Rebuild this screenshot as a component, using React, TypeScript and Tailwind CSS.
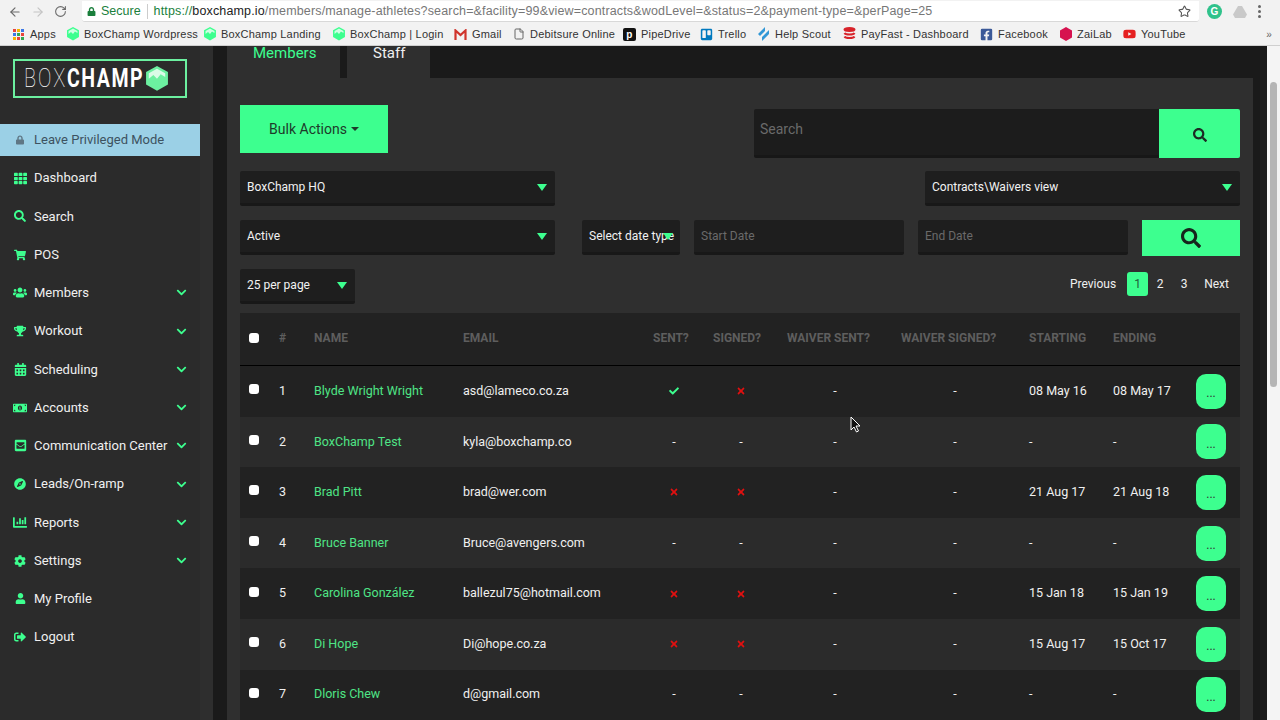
import {
  FaCalendarAlt,
  FaChartBar,
  FaCheck,
  FaChevronDown,
  FaCog,
  FaCompass,
  FaEnvelopeSquare,
  FaFacebookSquare,
  FaLock,
  FaMoneyBillAlt,
  FaSearch,
  FaShoppingCart,
  FaSignOutAlt,
  FaTh,
  FaTimes,
  FaTrello,
  FaTrophy,
  FaUser,
  FaUsers,
  FaYoutube,
} from "react-icons/fa";
import { ArrowLeft, ArrowRight, File, RotateCw, Star } from "lucide-react";
import React from "react";

const navItems = [
  { label: "Dashboard", icon: <FaTh size={13} /> },
  { label: "Search", icon: <FaSearch size={12} /> },
  { label: "POS", icon: <FaShoppingCart size={12} /> },
  { label: "Members", icon: <FaUsers size={15} />, more: true },
  { label: "Workout", icon: <FaTrophy size={12} />, more: true },
  { label: "Scheduling", icon: <FaCalendarAlt size={13} />, more: true },
  { label: "Accounts", icon: <FaMoneyBillAlt size={14} />, more: true },
  { label: "Communication Center", icon: <FaEnvelopeSquare size={13} />, more: true },
  { label: "Leads/On-ramp", icon: <FaCompass size={12} />, more: true },
  { label: "Reports", icon: <FaChartBar size={15} />, more: true },
  { label: "Settings", icon: <FaCog size={12} />, more: true },
  { label: "My Profile", icon: <FaUser size={11} /> },
  { label: "Logout", icon: <FaSignOutAlt size={12} /> },
];

const rows = [
  { n: 1, name: "Blyde Wright Wright", email: "asd@lameco.co.za", sent: "yes", signed: "no", start: "08 May 16", end: "08 May 17" },
  { n: 2, name: "BoxChamp Test", email: "kyla@boxchamp.co", sent: "-", signed: "-", start: "-", end: "-" },
  { n: 3, name: "Brad Pitt", email: "brad@wer.com", sent: "no", signed: "no", start: "21 Aug 17", end: "21 Aug 18" },
  { n: 4, name: "Bruce Banner", email: "Bruce@avengers.com", sent: "-", signed: "-", start: "-", end: "-" },
  { n: 5, name: "Carolina González", email: "ballezul75@hotmail.com", sent: "no", signed: "no", start: "15 Jan 18", end: "15 Jan 19" },
  { n: 6, name: "Di Hope", email: "Di@hope.co.za", sent: "no", signed: "no", start: "15 Aug 17", end: "15 Oct 17" },
  { n: 7, name: "Dloris Chew", email: "d@gmail.com", sent: "-", signed: "-", start: "-", end: "-" },
];

const HexIcon = ({ size = 12, color = "#3dff8f" }: { size?: number; color?: string }) => (
  <svg width={size} height={size * 1.12} viewBox="0 0 24 27">
    <path d="M12 0 24 6.7v13.6L12 27 0 20.3V6.7z" fill={color} />
    <path d="M3 14l5-4 4 4 4-5 5 3V8l-9-5-9 5z" fill="#fff" opacity=".75" />
  </svg>
);

const Triangle = () => (
  <svg width="10" height="7" viewBox="0 0 10 7" className="shrink-0">
    <path d="M0 0h10L5 7z" fill="#3dff8f" />
  </svg>
);

const Bookmark = ({ icon, label, className }: { icon: React.ReactNode; label: string; className?: string }) => (
  <div className={`flex items-center gap-[5px] shrink-0 overflow-hidden ${className ?? ""}`}>
    <span className="w-[13px] h-[14px] flex items-center justify-center shrink-0">{icon}</span>
    <span className="whitespace-nowrap">{label}</span>
  </div>
);

const BrowserBar = () => (
  <div className="h-[46px] bg-[#f2f2f2] shrink-0 border-b border-[#cfcfcf] font-['Liberation_Sans',sans-serif]">
    <div className="h-[23px] flex items-center">
      <div className="w-[82px] flex items-center pl-[8px] gap-[9px] text-[#6b6b6b] shrink-0">
        <ArrowLeft size={14} />
        <ArrowRight size={14} className="text-[#c4c4c4]" />
        <RotateCw size={13} />
      </div>
      <div className="w-[1117px] h-[21px] bg-white rounded-b-[3px] flex items-center text-[13px] shrink-0 border-b border-[#d8d8d8]">
        <FaLock size={9} className="text-[#1a7f3c] ml-[5px]" />
        <span className="text-[#1a7f3c] ml-[5px] text-[12.5px]">Secure</span>
        <span className="w-px h-[15px] bg-[#cccccc] mx-[6px]" />
        <span className="text-[12.5px] whitespace-nowrap tracking-[0.15px]">
          <span className="text-[#1a7f3c]">https://</span>
          <span className="text-[#222222]">boxchamp.io</span>
          <span className="text-[#777777]">/members/manage-athletes?search=&facility=99&view=contracts&wodLevel=&status=2&payment-type=&perPage=25</span>
        </span>
        <Star size={13} className="ml-auto mr-[8px] text-[#555555]" />
      </div>
      <div className="flex items-center flex-1 pl-[8px] gap-[11px]">
        <span className="w-[15px] h-[15px] rounded-full bg-[#2fc28b] text-white text-[10px] font-bold flex items-center justify-center">G</span>
        <svg width="14" height="12" viewBox="0 0 14 12">
          <path d="M5 0h4l5 8.5-2 3.5H2L0 8.500z" fill="#c9c9c9" />
        </svg>
        <span className="flex flex-col gap-[2px]">
          <span className="w-[3px] h-[3px] rounded-full bg-[#666666]" />
          <span className="w-[3px] h-[3px] rounded-full bg-[#666666]" />
          <span className="w-[3px] h-[3px] rounded-full bg-[#666666]" />
        </span>
      </div>
    </div>
    <div className="h-[22px] flex items-center text-[11px] text-[#333333] pl-[12px] tracking-[0.2px]">
      <Bookmark
        label="Apps"
        className="w-[54px]"
        icon={
          <span className="grid grid-cols-3 gap-[1px]">
            {["#e8453c", "#f4b400", "#3b78e7", "#3b78e7", "#34a853", "#e8453c", "#f4b400", "#e8453c", "#34a853"].map((c, i) => (
              <span key={i} className="w-[3px] h-[3px]" style={{ background: c }} />
            ))}
          </span>
        }
      />
      <Bookmark label="BoxChamp Wordpress" className="w-[137px]" icon={<HexIcon />} />
      <Bookmark label="BoxChamp Landing" className="w-[129px]" icon={<HexIcon />} />
      <Bookmark label="BoxChamp | Login" className="w-[122px]" icon={<HexIcon />} />
      <Bookmark
        label="Gmail"
        className="w-[58px]"
        icon={
          <svg width="13" height="11" viewBox="0 0 13 11" fill="none">
            <path d="M1.500 11V1.500l5 4.500 5-4.500V11" stroke="#d0342c" strokeWidth="2.200" />
          </svg>
        }
      />
      <Bookmark label="Debitsure Online" className="w-[111px]" icon={<File size={12} className="text-[#666666]" />} />
      <Bookmark
        label="PipeDrive"
        className="w-[77px]"
        icon={<span className="w-[13px] h-[13px] bg-[#111111] rounded-[2px] text-white text-[10px] font-bold flex items-center justify-center">p</span>}
      />
      <Bookmark label="Trello" className="w-[57px]" icon={<FaTrello size={13} className="text-[#0079bf]" />} />
      <Bookmark
        label="Help Scout"
        className="w-[86px]"
        icon={
          <svg width="13" height="14" viewBox="0 0 13 14">
            <path d="M1 7 8 0v4L3 9zM5 14 12 7V3L10 5 5 10z" fill="#3197d6" />
          </svg>
        }
      />
      <Bookmark
        label="PayFast - Dashboard"
        className="w-[137px]"
        icon={
          <svg width="13" height="14" viewBox="0 0 13 14" fill="none" stroke="#d8232a" strokeWidth="2">
            <ellipse cx="6.500" cy="2.500" rx="5" ry="1.500" fill="#d8232a" />
            <path d="M1.500 6c1 2 9 2 10 0M1.500 9.500c1 2 9 2 10 0" />
          </svg>
        }
      />
      <Bookmark label="Facebook" className="w-[79px]" icon={<FaFacebookSquare size={13} className="text-[#3b5998]" />} />
      <Bookmark
        label="ZaiLab"
        className="w-[64px]"
        icon={
          <svg width="12" height="14" viewBox="0 0 12 14">
            <path d="M6 0l6 3.500v7L6 14l-6-3.500v-7z" fill="#d6124f" />
          </svg>
        }
      />
      <Bookmark label="YouTube" icon={<FaYoutube size={14} className="text-[#e52020]" />} />
      <span className="ml-auto mr-[8px] text-[#666666] text-[10px]">»</span>
    </div>
  </div>
);

const Sidebar = () => (
  <aside className="w-[213px] shrink-0 bg-[#2e2e2e] flex">
    <div className="w-[200px] bg-[#2b2b2b]">
      <div className="h-[78px] pt-[13px] pl-[13px]">
        <div className="w-[174px] h-[39px] border-2 border-[#6cf0a0] flex items-center pl-[9px] text-white font-['Roboto',sans-serif] text-[25px] leading-none">
          <span className="font-thin tracking-[2.500px] scale-x-[0.8] origin-left w-[43px]">BOX</span>
          <span className="font-bold tracking-[2px] scale-x-[0.78] origin-left w-[79px]">CHAMP</span>
          <HexIcon size={22} color="#6cf0a0" />
        </div>
      </div>
      <div className="h-[32px] bg-[#9bd0e6] flex items-center text-[#3d5260] pl-[16px] gap-[11px]">
        <FaLock size={10} className="w-[8px] text-[#5f7785]" />
        <span className="ml-[-1px]">Leave Privileged Mode</span>
      </div>
      <nav className="mt-[3px]">
        {navItems.map((item) => (
          <div key={item.label} className="h-[38.25px] flex items-center text-[#f0f0f0]">
            <span className="w-[34px] pl-[13px] pr-[7px] flex justify-center text-[#3dff8f] shrink-0">{item.icon}</span>
            <span>{item.label}</span>
            {item.more && <FaChevronDown size={11} className="ml-auto mr-[13px] text-[#3dff8f]" />}
          </div>
        ))}
      </nav>
    </div>
  </aside>
);

const Select = ({ label, className }: { label: string; className: string }) => (
  <div className={`h-[35px] bg-[#1e1e1e] border-b-[3px] border-[#181818] rounded-[2px] flex items-center justify-between pl-[7px] pr-[8px] text-[12px] text-[#f2f2f2] ${className}`}>
    <span className="whitespace-nowrap">{label}</span>
    <Triangle />
  </div>
);

const DateInput = ({ label }: { label: string }) => (
  <div className="w-[210px] h-[35px] bg-[#1e1e1e] border-b-[3px] border-[#181818] rounded-[2px] flex items-center pl-[7px] text-[12px] text-[#6a6a6a]">
    {label}
  </div>
);

const StatusCell = ({ value, width }: { value: string; width: string }) => (
  <div className={`${width} flex justify-center`}>
    {value === "yes" && <FaCheck size={10} className="text-[#3dff8f]" />}
    {value === "no" && <FaTimes size={10} className="text-[#e01010]" />}
    {value === "-" && <span>-</span>}
  </div>
);

const tableCols = "grid grid-cols-[39px_35px_149px_190px_60px_74px_114px_128px_84px_83px_44px] items-center";

const Table = () => (
  <div className="mt-[9px] text-[12.500px] text-[#f0f0f0]">
    <div className={`${tableCols} h-[53px] bg-[#222222] border-b border-black text-[12px] font-bold text-[#5e5e5e] pb-[3px]`}>
      <div className="pl-[9px] flex">
        <input type="checkbox" readOnly className="appearance-none w-[10px] h-[10px] bg-white rounded-[3px]" />
      </div>
      <div>#</div>
      <div>NAME</div>
      <div>EMAIL</div>
      <div>SENT?</div>
      <div>SIGNED?</div>
      <div>WAIVER SENT?</div>
      <div>WAIVER SIGNED?</div>
      <div>STARTING</div>
      <div>ENDING</div>
      <div />
    </div>
    {rows.map((row) => (
      <div key={row.n} className={`${tableCols} h-[50.6px] ${row.n % 2 ? "bg-[#222222]" : "bg-[#2b2b2b]"}`}>
        <div className="pl-[9px] flex pb-[4px]">
          <input type="checkbox" readOnly className="appearance-none w-[10px] h-[10px] bg-white rounded-[3px]" />
        </div>
        <div>{row.n}</div>
        <div className="text-[#4fe586] whitespace-nowrap">{row.name}</div>
        <div className="whitespace-nowrap">{row.email}</div>
        <StatusCell value={row.sent} width="w-[42px]" />
        <StatusCell value={row.signed} width="w-[56px]" />
        <StatusCell value="-" width="w-[96px]" />
        <StatusCell value="-" width="w-[108px]" />
        <div className="whitespace-nowrap">{row.start}</div>
        <div className="whitespace-nowrap">{row.end}</div>
        <div className="w-[30px] h-[35px] bg-[#3dff8f] rounded-[10px] flex items-center justify-center pt-[4px] text-[#333333] text-[12px]">
          ...
        </div>
      </div>
    ))}
  </div>
);

const App = () => {
  return (
    <div className="h-[720px] w-[1280px] overflow-hidden flex flex-col relative font-['Roboto',sans-serif] text-[13px]">
      <BrowserBar />
      <div className="flex flex-1 min-h-0">
        <Sidebar />
        <main className="flex-1 bg-[#1a1a1a] px-[14px] min-w-0">
          <div className="flex h-[32px] text-[15px] bg-[#1a1a1a]">
            <div className="w-[113px] bg-[#2f2f2f] text-[#3dff8f] pl-[26px] leading-[14px]">Members</div>
            <div className="w-[83px] ml-[7px] bg-[#2f2f2f] text-[#f0f0f0] pl-[26px] leading-[14px]">Staff</div>
          </div>
          <div className="bg-[#2f2f2f] h-[700px] px-[13px] pt-[27px]">
            <div className="flex justify-between h-[66px]">
              <div className="w-[148px] h-[48px] bg-[#3dff8f] text-[#1d3b2a] text-[14px] flex items-center justify-center gap-[4px]">
                Bulk Actions
                <svg width="8" height="4" viewBox="0 0 8 4">
                  <path d="M0 0h8L4 4z" fill="#1d3b2a" />
                </svg>
              </div>
              <div className="flex w-[486px] h-[49px] mt-[4px]">
                <div className="flex-1 bg-[#1c1c1c] border-b-[3px] border-[#171717] rounded-l-[2px] pl-[6px] pb-[5px] flex items-center text-[14px] text-[#6a6a6a]">
                  Search
                </div>
                <div className="w-[81px] bg-[#3dff8f] rounded-r-[2px] flex items-center justify-center pt-[3px] text-[#1d2b24]">
                  <FaSearch size={14} />
                </div>
              </div>
            </div>
            <div className="flex justify-between">
              <Select label="BoxChamp HQ" className="w-[315px]" />
              <Select label="Contracts\Waivers view" className="w-[315px]" />
            </div>
            <div className="flex mt-[14px]">
              <Select label="Active" className="w-[315px]" />
              <Select label="Select date type" className="w-[98px] ml-[27px] gap-[-6px] !pr-[7px] [&>svg]:ml-[-14px]" />
              <div className="flex gap-[14px] ml-[14px]">
                <DateInput label="Start Date" />
                <DateInput label="End Date" />
                <div className="w-[98px] h-[36px] bg-[#3dff8f] flex items-center justify-center text-[#16261d]">
                  <FaSearch size={20} />
                </div>
              </div>
            </div>
            <div className="flex justify-between mt-[13px] items-start">
              <Select label="25 per page" className="w-[115px]" />
              <div className="flex items-center h-[24px] mt-[3px] text-[12px] text-[#efefef]">
                <span className="mr-[11px]">Previous</span>
                <span className="w-[21px] h-[24px] bg-[#3dff8f] rounded-[3px] text-[#1f5a3a] flex items-center justify-center">1</span>
                <span className="w-[24px] text-center">2</span>
                <span className="w-[24px] text-center">3</span>
                <span className="ml-[8px] mr-[11px]">Next</span>
              </div>
            </div>
            <Table />
          </div>
        </main>
        <div className="w-[13px] shrink-0 bg-[#f4f4f4] flex justify-center">
          <div className="w-[7px] h-[305px] mt-[36px] rounded-full bg-[#b5b5b5]" />
        </div>
      </div>
      {/* mouse pointer in the capture */}
      <svg width="11" height="17" viewBox="0 0 11 17" className="absolute left-[850px] top-[416px]">
        <path d="M1 1v13l3-3 2.500 5 2-1-2.500-5h4z" fill="#111" stroke="#fff" strokeWidth="1" />
      </svg>
    </div>
  );
};

export default App;
